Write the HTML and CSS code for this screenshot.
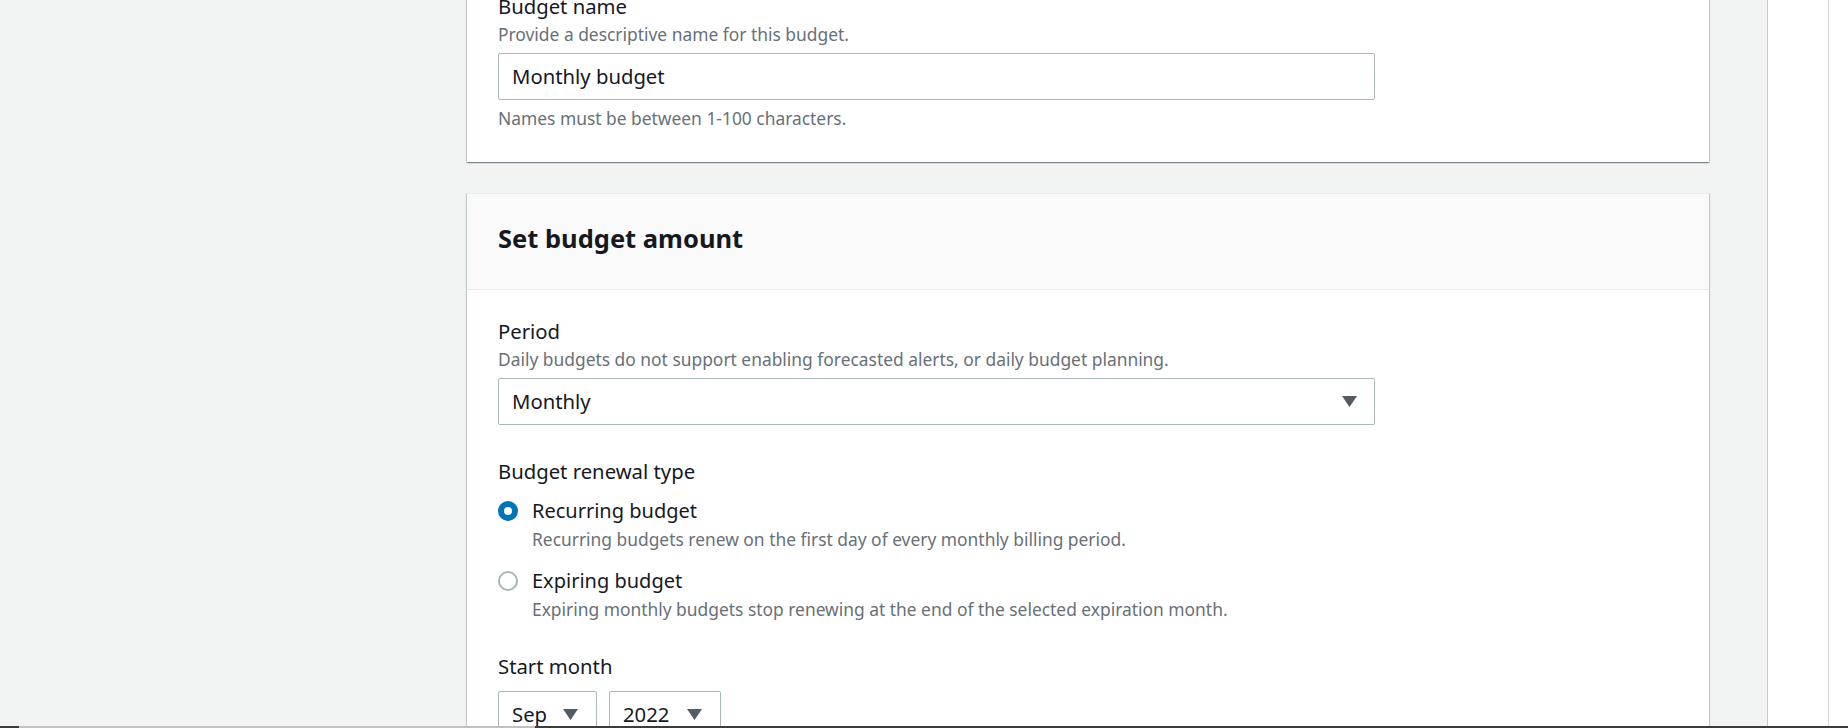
FILE: index.html
```html
<!DOCTYPE html>
<html lang="en">
<head>
<meta charset="utf-8">
<title>Create budget</title>
<link rel="stylesheet" href="styles.css">
</head>
<body>
<div class="page">
  <main class="main">
    <div class="column">
      <section class="card">
        <div class="card-body first">
          <div class="field">
            <div class="label">Budget name</div>
            <div class="desc">Provide a descriptive name for this budget.</div>
            <div class="control">
              <div class="input">Monthly budget</div>
            </div>
            <div class="constraint">Names must be between 1-100 characters.</div>
          </div>
        </div>
      </section>

      <section class="card">
        <header class="card-header">
          <h2>Set budget amount</h2>
        </header>
        <div class="card-body">
          <div class="field">
            <div class="label">Period</div>
            <div class="desc">Daily budgets do not support enabling forecasted alerts, or daily budget planning.</div>
            <div class="control">
              <div class="input select">
                <span>Monthly</span>
                <svg class="caret" viewBox="0 0 15 11" width="15" height="11"><path d="M0 0H15L7.5 11Z"/></svg>
              </div>
            </div>
          </div>

          <div class="field spaced">
            <div class="label">Budget renewal type</div>
            <div class="radios">
              <div class="radio-row">
                <span class="radio checked"></span>
                <div class="radio-text">
                  <div class="radio-label">Recurring budget</div>
                  <div class="desc">Recurring budgets renew on the first day of every monthly billing period.</div>
                </div>
              </div>
              <div class="radio-row">
                <span class="radio"></span>
                <div class="radio-text">
                  <div class="radio-label">Expiring budget</div>
                  <div class="desc">Expiring monthly budgets stop renewing at the end of the selected expiration month.</div>
                </div>
              </div>
            </div>
          </div>

          <div class="field spaced-lg">
            <div class="label">Start month</div>
            <div class="control inline">
              <div class="input select small month">
                <span>Sep</span>
                <svg class="caret" viewBox="0 0 15 11" width="15" height="11"><path d="M0 0H15L7.5 11Z"/></svg>
              </div>
              <div class="input select small year">
                <span>2022</span>
                <svg class="caret" viewBox="0 0 15 11" width="15" height="11"><path d="M0 0H15L7.5 11Z"/></svg>
              </div>
            </div>
          </div>
        </div>
      </section>
    </div>
  </main>
  <aside class="rail"></aside>
  <aside class="rail-edge"></aside>
</div>
<div class="hbar"><span class="hbar-start"></span><span class="hbar-thumb"></span></div>
</body>
</html>
```

FILE: styles.css
```css
* { box-sizing: border-box; }

html, body {
  margin: 0;
  padding: 0;
  height: 100%;
  overflow: hidden;
}

body {
  display: flex;
  flex-direction: column;
  font-family: "Noto Sans", "Open Sans", "Liberation Sans", sans-serif;
  color: #16191f;
  background: #f2f3f3;
}

.page {
  flex: 1;
  display: flex;
  min-height: 0;
  overflow: hidden;
}

.main {
  width: 1767px;
  flex: none;
  background: #f2f3f3;
  padding-left: 467px;
  padding-right: 58px;
  overflow: hidden;
}

.column {
  margin-top: -35px;
  display: flex;
  flex-direction: column;
  gap: 31px;
}

.card {
  background: #ffffff;
  box-shadow: 0 1px 1px 0 rgba(0, 28, 36, 0.3),
              1px 1px 1px 0 rgba(0, 28, 36, 0.15),
              -1px 1px 1px 0 rgba(0, 28, 36, 0.15);
  border-top: 1px solid #eaeded;
}

.card-header {
  background: #fafafa;
  border-bottom: 1px solid #eaeded;
  padding: 28px 31px 34px;
}

.card-header h2 {
  margin: 0;
  font-size: 25.5px;
  line-height: 33px;
  font-weight: 700;
  color: #16191f;
}

.card-body {
  padding: 26px 31px 31px;
}

.card-body.first {
  padding-top: 25px;
  padding-bottom: 32px;
}

.field.spaced { margin-top: 31px; }
.field.spaced-lg { margin-top: 30px; }

.label {
  font-size: 20.3px;
  line-height: 30px;
  color: #16191f;
}

.desc {
  font-size: 17.4px;
  line-height: 24px;
  color: #687078;
  margin-top: 1px;
}

.constraint {
  font-size: 17.4px;
  line-height: 24px;
  color: #687078;
  margin-top: 6px;
}

.control {
  margin-top: 7px;
}

.control.inline {
  margin-top: 10px;
  display: flex;
  gap: 12px;
}

.input {
  width: 877px;
  height: 47px;
  border: 1px solid #aab7b8;
  border-radius: 2px;
  background: #fff;
  padding: 0 17px 0 13px;
  font-size: 20.3px;
  line-height: 45px;
  color: #16191f;
  display: flex;
  align-items: center;
}

.select {
  justify-content: space-between;
}

.caret {
  fill: #545b64;
  flex: none;
}

.select.small {
  justify-content: flex-start;
  gap: 16px;
}

.select.month { width: 99px; }
.select.year { width: 112px; gap: 18px; }

.radios {
  margin-top: 10px;
  display: flex;
  flex-direction: column;
  gap: 15px;
}

.radio-row {
  display: flex;
  align-items: flex-start;
  gap: 14px;
}

.radio {
  flex: none;
  width: 20px;
  height: 20px;
  margin-top: 5px;
  border-radius: 50%;
  border: 2px solid #aab7b8;
  background: #fff;
}

.radio.checked {
  border: 6px solid #0073bb;
}

.radio-label {
  font-size: 20px;
  line-height: 30px;
  color: #16191f;
}

.rail {
  width: 61px;
  flex: none;
  background: #fff;
  border-left: 1px solid #c6cbcd;
}

.rail-edge {
  flex: 1;
  background: #fff;
  border-left: 1px solid #d5dbdb;
}

.hbar {
  height: 2px;
  flex: none;
  display: flex;
  background: #3c3c3c;
}

.hbar-start {
  width: 19px;
  background: #3c3c3c;
}

.hbar-thumb {
  width: 516px;
  background: #c1c1c1;
}
```
